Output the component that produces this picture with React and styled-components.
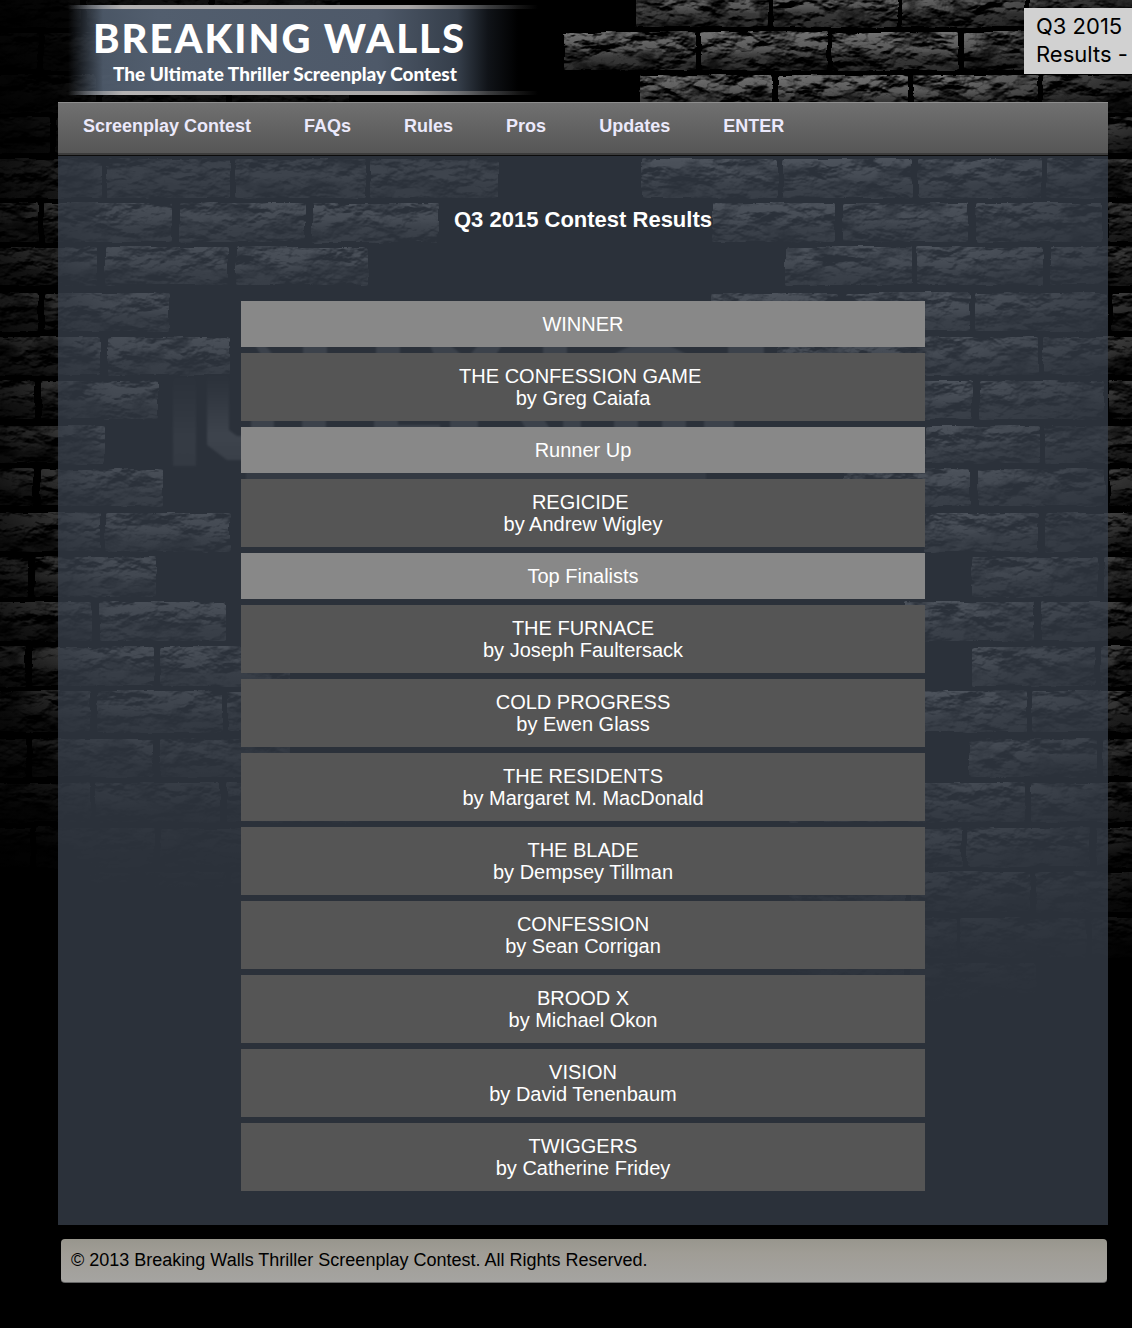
import React from 'react';
import styled, { createGlobalStyle } from 'styled-components';

const GlobalStyle = createGlobalStyle`
  * {
    box-sizing: border-box;
  }
  body {
    margin: 0;
    background-color: #000;
    color: #fff;
    font-family: "Liberation Sans", Arial, sans-serif;
  }
`;

const Page = styled.div`
  position: relative;
  overflow: hidden;
  padding: 5px 24px 45px 58px;
`;

const Backdrop = styled.svg`
  position: absolute;
  top: 0;
  left: 0;
  z-index: -1;
`;

const Banner = styled.header`
  position: relative;
  width: 500px;
  height: 90px;
  padding: 9px 0 0 35px;
  background-image: linear-gradient(
    90deg,
    rgba(82, 95, 112, 0) 2%,
    rgba(82, 95, 112, 0.9) 9%,
    #525e6e 20%,
    #4e5969 64%,
    #353e4a 80%,
    rgba(20, 24, 30, 0.8) 86%,
    rgba(0, 0, 0, 0) 92%
  );

  &::before,
  &::after {
    content: '';
    position: absolute;
    left: 0;
    width: 100%;
    height: 4px;
    background-image: linear-gradient(
      90deg,
      rgba(180, 180, 180, 0) 2%,
      #b4b2b2 13%,
      #a8a6a6 70%,
      rgba(90, 90, 90, 0.6) 86%,
      rgba(60, 60, 60, 0) 96%
    );
  }
  &::before {
    top: 0;
  }
  &::after {
    bottom: 0;
  }
`;

const Logo = styled.h1`
  margin: 0;
  font-family: Lato, sans-serif;
  font-size: 40px;
  font-weight: 900;
  line-height: 48px;
  letter-spacing: 2px;
  white-space: nowrap;
`;

const Tagline = styled.p`
  margin: 0;
  padding-left: 20px;
  font-family: Lato, sans-serif;
  font-size: 19px;
  font-weight: 900;
  line-height: 23px;
  white-space: nowrap;
`;

const Nav = styled.nav`
  display: flex;
  flex-wrap: wrap;
  align-items: flex-start;
  gap: 0 53px;
  min-height: 54px;
  margin-top: 7px;
  padding: 10px 25px;
  border-top: 1px solid #8e8e8e;
  border-bottom: 1px solid #0c0c0c;
  box-shadow: inset 0 -2px #3c3c3c;
  background-image: linear-gradient(#707070, #555);
`;

const NavLink = styled.a`
  color: #ebe9fb;
  font-size: 18px;
  font-weight: bold;
  line-height: 26px;
  text-decoration: none;
`;

const Main = styled.main`
  padding: 51px 20px 28px;
  background-color: rgba(57, 65, 77, 0.75);
`;

const Title = styled.h2`
  margin: 0 0 62px;
  font-size: 22px;
  line-height: 26px;
  text-align: center;
`;

const Results = styled.table`
  width: 100%;
  max-width: 696px;
  margin: 0 auto;
  border-spacing: 6px;
  font-size: 20px;
  line-height: 22px;
  text-align: center;
`;

const Award = styled.th`
  padding: 12px;
  background-color: #888;
  font-weight: normal;
`;

const Entry = styled.td`
  padding: 12px;
  background-color: #555;
`;

const Footer = styled.footer`
  margin: 14px 1px 0 3px;
  padding: 10px 10px 11px;
  border-bottom: 1px solid #666;
  border-radius: 4px;
  background-image: linear-gradient(#98968d, #a09d96 35%, #a5a4a1);
  color: #000;
  font-size: 18px;
  line-height: 22px;
`;

const Notice = styled.aside`
  position: absolute;
  top: 8px;
  right: 0;
  width: 108px;
  padding: 4px 0 6px 12px;
  background-color: #d1d1d1;
  color: #000;
  font-family: Inter, sans-serif;
  font-size: 22px;
  line-height: 28px;
`;

const links = ['Screenplay Contest', 'FAQs', 'Rules', 'Pros', 'Updates', 'ENTER'];

const groups = [
  {
    award: 'WINNER',
    entries: [['THE CONFESSION GAME\u00a0', 'Greg Caiafa']],
  },
  {
    award: 'Runner Up',
    entries: [['REGICIDE\u00a0', 'Andrew Wigley']],
  },
  {
    award: 'Top Finalists',
    entries: [
      ['THE FURNACE', 'Joseph Faultersack'],
      ['COLD PROGRESS', 'Ewen Glass'],
      ['THE RESIDENTS', 'Margaret M. MacDonald'],
      ['THE BLADE', 'Dempsey Tillman'],
      ['CONFESSION', 'Sean Corrigan'],
      ['BROOD X', 'Michael Okon'],
      ['VISION', 'David Tenenbaum'],
      ['TWIGGERS', 'Catherine Fridey'],
    ],
  },
];

// Each course of the wall: top, bottom, then [start, end] of every brick
const courses = [
  [-10, 27, [[-40, 80], [86, 210], [216, 340], [636, 768], [773, 898], [902, 1025], [1030, 1160]]],
  [32, 70, [[-80, 38], [44, 160], [166, 290], [296, 410], [564, 696], [701, 827], [832, 958], [964, 1090], [1096, 1200]]],
  [75, 113, [[-30, 96], [102, 226], [232, 350], [640, 772], [778, 908], [913, 1038], [1043, 1170]]],
  [117, 153, [[-70, 50], [56, 180], [710, 830], [976, 1102], [1107, 1200]]],
  [159, 198, [[-20, 102], [107, 230], [235, 366], [371, 498], [642, 778], [783, 912], [918, 1042], [1047, 1180]]],
  [203, 242, [[-90, 38], [44, 172], [180, 305], [312, 438], [712, 835], [843, 968], [976, 1102], [1108, 1200]]],
  [247, 285, [[-30, 97], [105, 228], [236, 368], [785, 912], [917, 1043], [1050, 1180]]],
  [293, 331, [[-90, 38], [44, 169], [712, 838], [845, 970], [975, 1107], [1112, 1200]]],
  [337, 375, [[-30, 100], [108, 230], [776, 910], [915, 1038], [1043, 1180]]],
  [381, 419, [[-90, 34], [41, 158], [850, 972], [980, 1104], [1109, 1200]]],
  [426, 463, [[-30, 105], [925, 1040], [1045, 1180]]],
  [469, 506, [[-90, 33], [40, 163], [844, 970], [978, 1105], [1110, 1200]]],
  [513, 552, [[-30, 100], [105, 230], [925, 1038], [1045, 1180]]],
  [557, 597, [[-90, 28], [35, 156], [972, 1098], [1104, 1200]]],
  [602, 641, [[-30, 92], [100, 226], [905, 1034], [1042, 1180]]],
  [647, 686, [[-90, 25], [32, 154], [160, 290], [972, 1095], [1101, 1200]]],
  [691, 732, [[-30, 90], [97, 223], [228, 350], [900, 1027], [1032, 1180]]],
  [739, 777, [[-90, 26], [32, 153], [160, 290], [969, 1097], [1103, 1200]]],
  [783, 822, [[-30, 90], [95, 220], [227, 360], [790, 1025], [1031, 1180]]],
  [828, 867, [[-90, 30], [36, 154], [160, 290], [790, 962], [967, 1090], [1097, 1200]]],
  [872, 912, [[90, 225], [231, 360], [790, 905], [910, 1030], [1036, 1180]]],
  [918, 958, [[830, 957], [960, 1086], [1092, 1200]]],
  [963, 1003, [[790, 905], [911, 1036]]],
];

const BrickWall = () => {
  return (
    <Backdrop width="1132" height="1030" viewBox="0 0 1132 1030" aria-hidden="true">
      <defs>
        <filter
          id="stone"
          filterUnits="userSpaceOnUse"
          x="0"
          y="0"
          width="1132"
          height="1030"
          colorInterpolationFilters="sRGB"
        >
          <feTurbulence type="fractalNoise" baseFrequency="0.03 0.05" numOctaves="6" seed="21" result="noise" />
          <feDiffuseLighting in="noise" surfaceScale="9" diffuseConstant="1.1" lightingColor="#fff" result="light">
            <feDistantLight azimuth="255" elevation="34" />
          </feDiffuseLighting>
          {/* patches of darker stone */}
          <feColorMatrix
            in="noise"
            values="0 0 3 0 -0.7  0 0 3 0 -0.7  0 0 3 0 -0.7  0 0 0 0 1"
            result="patches"
          />
          <feComposite in="light" in2="patches" operator="arithmetic" k1="0.8" k2="0.5" result="surface" />
          <feDisplacementMap
            in="SourceGraphic"
            in2="noise"
            scale="5"
            xChannelSelector="R"
            yChannelSelector="G"
            result="rough"
          />
          <feComposite in="rough" in2="surface" operator="arithmetic" k1="1.4" />
        </filter>
        <filter id="soft">
          <feGaussianBlur stdDeviation="1" />
        </filter>
        <linearGradient id="face" x1="0" y1="0" x2="0" y2="1">
          <stop offset="0" stopColor="#606060" />
          <stop offset="0.45" stopColor="#4a4a4a" />
          <stop offset="0.65" stopColor="#303030" />
          <stop offset="1" stopColor="#262626" />
        </linearGradient>
        <linearGradient id="leftShade">
          <stop offset="0" stopColor="#000" stopOpacity="0.8" />
          <stop offset="0.05" stopColor="#000" stopOpacity="0.6" />
          <stop offset="0.1" stopColor="#000" stopOpacity="0.15" />
          <stop offset="0.3" stopColor="#000" stopOpacity="0" />
          <stop offset="0.85" stopColor="#000" stopOpacity="0" />
          <stop offset="1" stopColor="#000" stopOpacity="0.6" />
        </linearGradient>
        <linearGradient id="topShade" x1="0" y1="0" x2="0" y2="1">
          <stop offset="0" stopColor="#000" stopOpacity="0.8" />
          <stop offset="0.7" stopColor="#000" stopOpacity="0.7" />
          <stop offset="1" stopColor="#000" stopOpacity="0" />
        </linearGradient>
        <linearGradient id="floor" x1="0" y1="0" x2="0" y2="1">
          <stop offset="0" stopColor="#000" stopOpacity="0" />
          <stop offset="0.75" stopColor="#000" stopOpacity="0.85" />
          <stop offset="1" stopColor="#000" />
        </linearGradient>
        <linearGradient id="beam" x1="0" y1="0" x2="0" y2="1">
          <stop offset="0" stopColor="#444" stopOpacity="0" />
          <stop offset="0.7" stopColor="#4a4a4a" />
          <stop offset="1" stopColor="#3c3c3c" />
        </linearGradient>
      </defs>
      <g filter="url(#stone)">
        {courses.map(([top, bottom, bricks]) =>
          bricks.map(([start, end]) => (
            <rect
              key={`${top}-${start}`}
              x={start}
              y={top}
              width={end - start}
              height={bottom - top}
              rx="2"
              fill="url(#face)"
            />
          ))
        )}
      </g>
      <rect width="1132" height="1030" fill="url(#leftShade)" />
      <rect width="540" height="200" fill="url(#topShade)" />
      <rect width="1132" height="112" fill="#000" opacity="0.15" />
      <rect y="650" width="560" height="250" fill="url(#floor)" />
      <rect y="900" width="560" height="130" fill="#000" />
      <rect x="560" y="720" width="572" height="310" fill="url(#floor)" />
      {/* old sign showing through between the rows */}
      <g filter="url(#soft)">
        <path d="M173 374h23v92h-23z" fill="url(#beam)" opacity="0.6" />
        <path d="M207 374h22v56l8 6h18v24h-28l-20-15z" fill="url(#beam)" />
        <path
          d="M255 345h10l8 10h-12zM303 345h24v10h-24zM376 345h24v10h-24zM430 345h20l12 10h-28zM478 345l-8 10h26l6-10zM543 345h24v10h-24zM632 345h36l20 10h-76zM728 345h36v10h-36z"
          fill="#454545"
        />
        <path
          d="M251 419h23v10h-23zM302 419h24v10h-24zM374 419h24v10h-24zM398 425h42v4h-42zM450 419h28v10h-28zM520 419h24l6 10h-24zM563 419h18v10h-18zM614 419h24v10h-24zM662 419h24v10h-24zM704 419h30v10h-30z"
          fill="#454545"
        />
        <path d="M246 471h460v10H246z" fill="#262626" />
      </g>
    </Backdrop>
  );
};

const ResultsTable = () => {
  return (
    <Results aria-labelledby="results-title">
      {groups.map(({ award, entries }) => (
        <tbody key={award}>
          <tr>
            <Award scope="rowgroup">{award}</Award>
          </tr>
          {entries.map(([script, writer]) => (
            <tr key={script}>
              <Entry>
                {script}
                <br />
                by {writer}
              </Entry>
            </tr>
          ))}
        </tbody>
      ))}
    </Results>
  );
};

const App = () => {
  return (
    <Page>
      <GlobalStyle />
      <BrickWall />
      <Banner>
        <Logo>BREAKING WALLS</Logo>
        <Tagline>The Ultimate Thriller Screenplay Contest</Tagline>
      </Banner>
      <Nav>
        {links.map(link => (
          <NavLink key={link} href="#">
            {link}
          </NavLink>
        ))}
      </Nav>
      <Main>
        <Title id="results-title">Q3 2015 Contest Results</Title>
        <ResultsTable />
      </Main>
      <Footer>© 2013 Breaking Walls Thriller Screenplay Contest. All Rights Reserved.</Footer>
      <Notice>Q3 2015 Results -</Notice>
    </Page>
  );
};

export default App;
